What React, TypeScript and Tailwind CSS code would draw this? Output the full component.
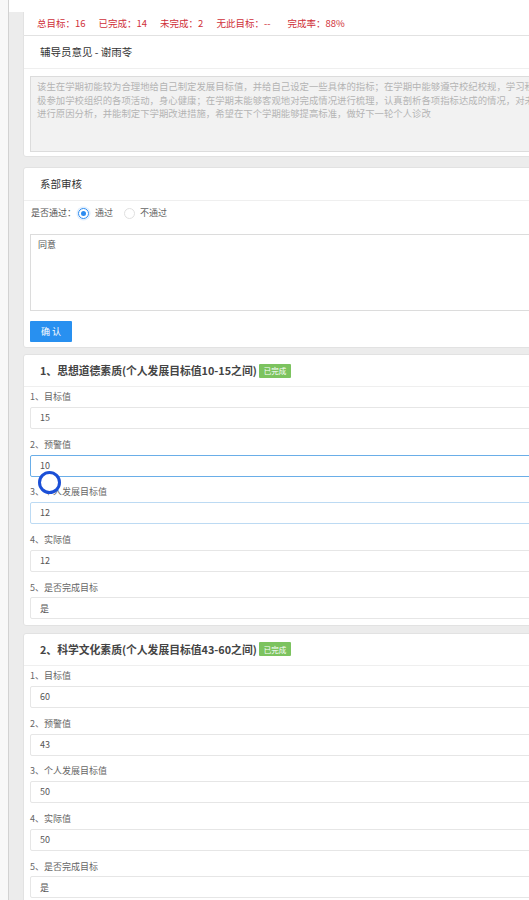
import React from "react";

const font = { fontFamily: '"Noto Sans CJK SC", "Noto Sans", sans-serif' };

interface FieldItem {
  label: string;
  value: string;
  tone?: "focus" | "soft";
}

const section1: FieldItem[] = [
  { label: "1、目标值", value: "15" },
  { label: "2、预警值", value: "10", tone: "focus" },
  { label: "3、个人发展目标值", value: "12", tone: "soft" },
  { label: "4、实际值", value: "12" },
  { label: "5、是否完成目标", value: "是" },
];

const section2: FieldItem[] = [
  { label: "1、目标值", value: "60" },
  { label: "2、预警值", value: "43" },
  { label: "3、个人发展目标值", value: "50" },
  { label: "4、实际值", value: "50" },
  { label: "5、是否完成目标", value: "是" },
];

// the opinion box is wider than the viewport, so its lines break off-screen
const opinionLines = [
  "该生在学期初能较为合理地给自己制定发展目标值，并给自己设定一些具体的指标；在学期中能够遵守校纪校规，学习积",
  "极参加学校组织的各项活动，身心健康；在学期末能够客观地对完成情况进行梳理，认真剖析各项指标达成的情况，对未达成的指标",
  "进行原因分析，并能制定下学期改进措施，希望在下个学期能够提高标准，做好下一轮个人诊改",
];

function Field({ label, value, tone }: FieldItem) {
  const border =
    tone === "focus"
      ? "border-[#6aaee8]"
      : tone === "soft"
      ? "border-[#bcdaf3]"
      : "border-[#e6e6e6]";
  return (
    <div className="mb-[5.6px]">
      <div className="h-[20px] flex items-center text-[9px] text-[#666]">{label}</div>
      <div
        className={`h-[22px] border ${border} rounded-[2px] bg-white px-[9px] flex items-center text-[9px] text-[#555]`}
      >
        {value}
      </div>
    </div>
  );
}

function PanelHeader({ children, h = "h-[33px]" }: { children: React.ReactNode; h?: string }) {
  return <div className={`${h} border-b border-[#efefef] flex items-center pl-[16px]`}>{children}</div>;
}

function Section({ title, items }: { title: string; items: FieldItem[] }) {
  return (
    <div className="bg-white border border-[#e2e2e2] rounded-[3px]">
      <PanelHeader h="h-[32px]">
        <span className="text-[10.8px] font-bold text-[#444]">{title}</span>
        <span className="ml-[2px] h-[14px] px-[5px] bg-[#7cc35f] text-white text-[7.5px] flex items-center rounded-[1px]">
          已完成
        </span>
      </PanelHeader>
      <div className="px-[6px]">
        {items.map((it) => (
          <Field key={it.label} {...it} />
        ))}
      </div>
    </div>
  );
}

export default function App() {
  return (
    <div className="relative flex w-[529px] h-[900px] overflow-hidden bg-[#ececec]" style={font}>
      {/* left rail */}
      <div className="w-[9px] shrink-0 bg-[#f8f8f8] border-r border-[#d2d2d2]" />

      <div className="flex-1 pl-[14px]">
        <div className="w-[540px]">
          <div className="h-[12px] bg-white -ml-[14px] w-[554px]" />

          {/* stats */}
          <div className="h-[23px] bg-white border-l border-[#e2e2e2] flex items-center pl-[13px] text-[9.5px] text-[#cf3038] gap-[13px]">
            <span>总目标：16</span>
            <span>已完成：14</span>
            <span>未完成：2</span>
            <span>无此目标：--</span>
            <span className="ml-[4px]">完成率：88%</span>
          </div>

          {/* counsellor opinion */}
          <div className="bg-white border border-[#e2e2e2] rounded-b-[3px] pb-[4px]">
            <PanelHeader>
              <span className="text-[10.5px] text-[#333]">辅导员意见 - 谢雨苓</span>
            </PanelHeader>
            <div className="px-[6px] pt-[7px]">
              <div className="h-[76px] overflow-hidden border border-[#dcdcdc] bg-[#f2f2f2] px-[6px] pt-[3px] text-[9.4px] leading-[13.5px] text-[#b4b4b4]">
                {opinionLines.map((l) => (
                  <div key={l} className="whitespace-nowrap">
                    {l}
                  </div>
                ))}
              </div>
            </div>
          </div>

          {/* department review */}
          <div className="mt-[10px] bg-white border border-[#e2e2e2] rounded-[3px] pb-[5px]">
            <PanelHeader>
              <span className="text-[10.5px] text-[#333]">系部审核</span>
            </PanelHeader>
            <div className="px-[6px]">
              <div className="h-[24px] flex items-center text-[9px] text-[#555]">
                <span className="ml-[1px]">是否通过：</span>
                <span className="ml-[2px] w-[11px] h-[11px] rounded-full border border-[#2d8cf0] flex items-center justify-center shadow-[0_0_0_1.5px_rgba(45,140,240,0.15)]">
                  <span className="w-[5px] h-[5px] rounded-full bg-[#2d8cf0]" />
                </span>
                <span className="ml-[6px] text-[#666]">通过</span>
                <span className="ml-[11px] w-[11px] h-[11px] rounded-full border border-[#e0e0e0]" />
                <span className="ml-[5px] text-[#666]">不通过</span>
              </div>
              <div className="mt-[9px] h-[77px] border border-[#dcdcdc] bg-white px-[7px] pt-[3px] text-[9px] text-[#555]">
                同意
              </div>
              <button className="mt-[10px] w-[42px] h-[21px] bg-[#2890f0] text-white text-[9px] flex items-center justify-center rounded-[1px]">
                确 认
              </button>
            </div>
          </div>

          <div className="mt-[6px]">
            <Section title="1、思想道德素质(个人发展目标值10-15之间)" items={section1} />
          </div>
          <div className="mt-[7px]">
            <Section title="2、科学文化素质(个人发展目标值43-60之间)" items={section2} />
          </div>
        </div>
      </div>

      {/* touch indicator */}
      <div className="absolute left-[38px] top-[471px] w-[23px] h-[23px] rounded-full border-[3px] border-[#1b4fd6] bg-white" />
    </div>
  );
}
